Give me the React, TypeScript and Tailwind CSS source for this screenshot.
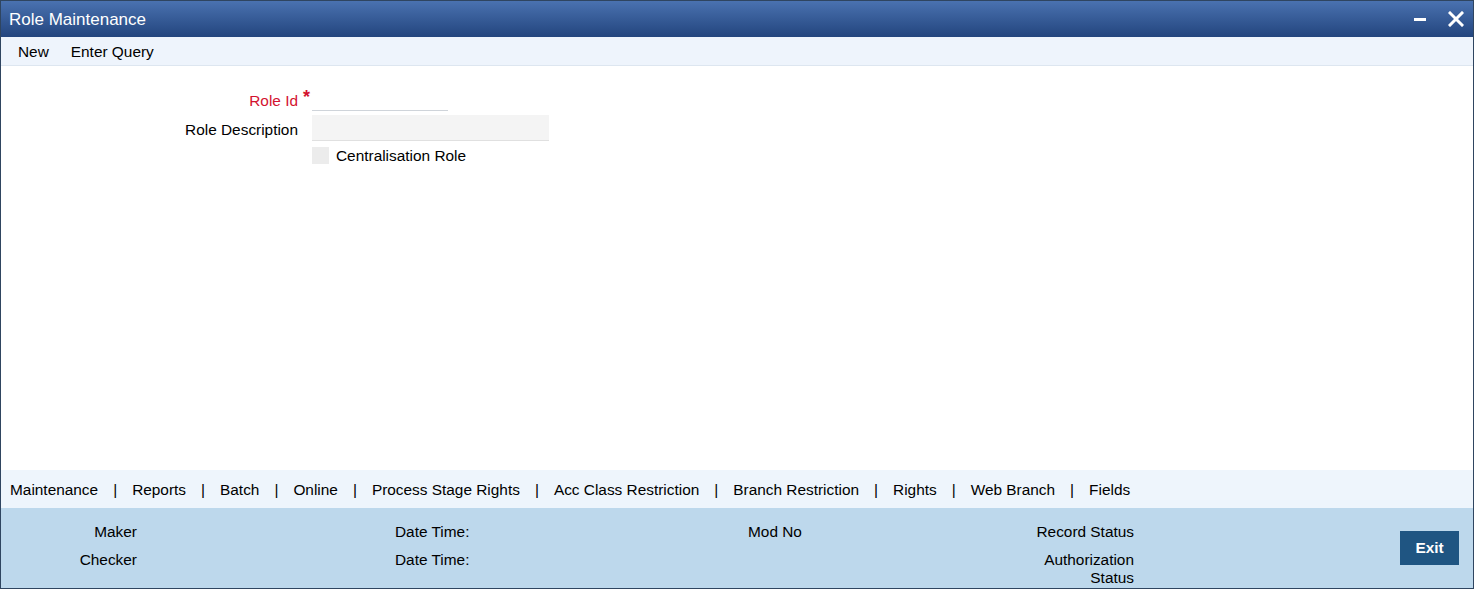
import React from "react";

const tabs = [
  "Maintenance",
  "Reports",
  "Batch",
  "Online",
  "Process Stage Rights",
  "Acc Class Restriction",
  "Branch Restriction",
  "Rights",
  "Web Branch",
  "Fields",
];

export default function App() {
  return (
    <div className="w-[1475px] h-[593px] bg-white" style={{ fontFamily: '"Liberation Sans", Arial, sans-serif' }}>
      <div className="w-[1474px] h-[589px] border border-[#2f4560] flex flex-col">
        {/* Title bar */}
        <div className="h-[36px] flex items-center justify-between bg-gradient-to-b from-[#4a72b0] to-[#23457e] pl-[8px] pr-[9px]">
          <span className="text-white text-[17px] leading-none">Role Maintenance</span>
          <div className="flex items-center gap-[22px]">
            <svg width="12" height="16" viewBox="0 0 12 16">
              <rect x="0" y="7" width="12" height="3" fill="white" />
            </svg>
            <svg width="16" height="16" viewBox="0 0 16 16">
              <path d="M2 2 L14 14 M14 2 L2 14" stroke="white" strokeWidth="3" strokeLinecap="square" />
            </svg>
          </div>
        </div>
        {/* Toolbar */}
        <div className="h-[29px] flex items-center bg-[#eef4fc] border-b border-[#dde6f0] text-[15.4px] text-black pl-[17px] pt-[1px] gap-[22px]">
          <span>New</span>
          <span>Enter Query</span>
        </div>
        {/* Main */}
        <div className="flex-1 bg-white pt-[20px] text-[15.4px]">
          <div className="flex items-center h-[25px]">
            <span className="w-[297px] text-right text-[#d3122f] relative top-[2px]">Role Id</span>
            <span className="w-[14px] text-[#d3122f] pl-[5px] text-[18px] font-bold relative -top-[1px]">*</span>
            <div className="w-[136px] h-[25px] border-b border-[#cfd4da] bg-white" />
          </div>
          <div className="flex items-center h-[26px] mt-[4px]">
            <span className="w-[297px] text-right text-black relative top-[2px]">Role Description</span>
            <span className="w-[14px]" />
            <div className="w-[237px] h-[26px] bg-[#f4f4f4] border-b border-[#e0e0e0]" />
          </div>
          <div className="flex items-center h-[17px] mt-[6px]">
            <span className="w-[311px]" />
            <div className="w-[17px] h-[17px] bg-[#ececec]" />
            <span className="ml-[7px] text-black">Centralisation Role</span>
          </div>
        </div>
        {/* Tabs */}
        <div className="h-[38px] flex items-center bg-[#eef5fc] text-[15.4px] text-black pl-[9px] pt-[2px]">
          {tabs.map((t, i) => (
            <React.Fragment key={t}>
              {i > 0 && <span className="mx-[15px]">|</span>}
              <span>{t}</span>
            </React.Fragment>
          ))}
        </div>
        {/* Footer */}
        <div className="h-[80px] bg-[#bdd8ec] flex items-start text-[15.4px] text-black pt-[15px] leading-[18px]">
          <div className="w-[136px] text-right flex flex-col gap-[10px]">
            <span>Maker</span>
            <span>Checker</span>
          </div>
          <div className="ml-[258px] w-[353px] flex flex-col gap-[10px]">
            <span>Date Time:</span>
            <span>Date Time:</span>
          </div>
          <div className="w-[240px]">
            <span>Mod No</span>
          </div>
          <div className="w-[146px] text-right flex flex-col gap-[10px]">
            <span>Record Status</span>
            <span>
              Authorization
              <br />
              Status
            </span>
          </div>
          <div className="ml-auto mr-[14px] mt-[8px]">
            <button className="w-[59px] h-[34px] bg-[#1f5582] text-white font-bold text-[15.4px]">Exit</button>
          </div>
        </div>
      </div>
    </div>
  );
}
